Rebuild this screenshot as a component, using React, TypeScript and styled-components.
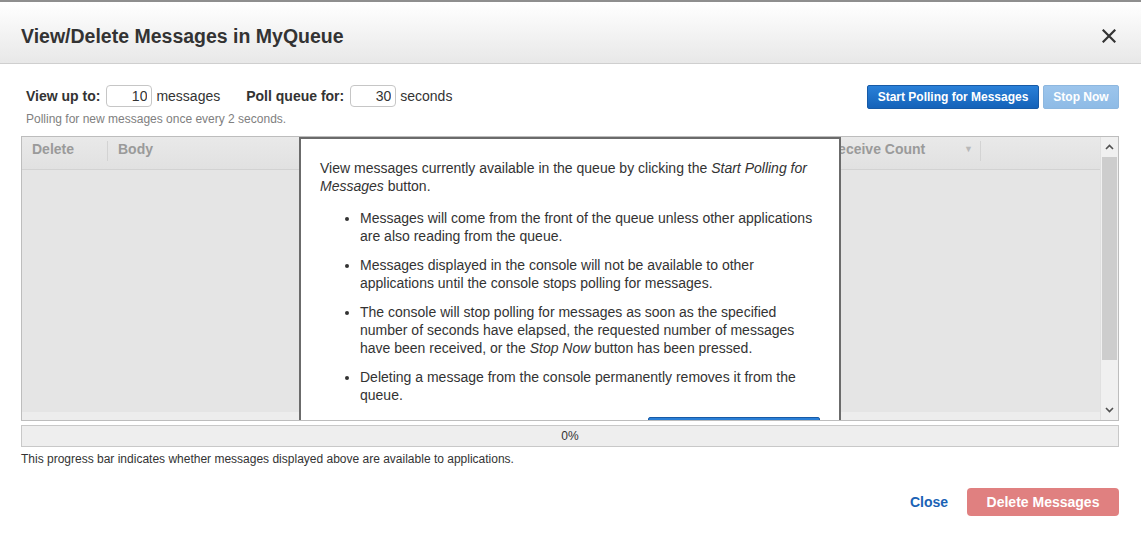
import React from 'react';
import styled, { createGlobalStyle } from 'styled-components';

const GlobalStyle = createGlobalStyle`
  html, body {
    margin: 0;
    padding: 0;
    background: #fff;
    font-family: "Liberation Sans", Arial, sans-serif;
    color: #333;
  }
`;

const Dialog = styled.div`
  width: 1141px;
  height: 533px;
  border-top: 2px solid #8e8e8e;
  box-sizing: border-box;
  display: flex;
  flex-direction: column;
`;

const Header = styled.div`
  height: 62px;
  box-sizing: border-box;
  display: flex;
  align-items: center;
  justify-content: space-between;
  padding: 7px 24px 0 21px;
  background: linear-gradient(#ffffff, #e8e8e8);
  border-bottom: 1px solid #cfcfcf;
`;

const Title = styled.h1`
  margin: 0;
  font-size: 19.5px;
  font-weight: bold;
  color: #333;
`;

const CloseIcon = styled.button`
  border: 0;
  background: none;
  padding: 0;
  width: 16px;
  height: 16px;
  display: flex;
  align-items: center;
  justify-content: center;
  cursor: pointer;
`;

const Body = styled.div`
  padding: 21px 22px 0 21px;
  display: flex;
  flex-direction: column;
`;

const ControlsRow = styled.div`
  display: flex;
  justify-content: space-between;
  align-items: flex-start;
  padding-left: 5px;
`;

const Controls = styled.div`
  display: flex;
  flex-direction: column;
`;

const Fields = styled.div`
  display: flex;
  align-items: center;
  font-size: 14px;
  height: 24px;
  margin-top: -1px;
`;

const FieldLabel = styled.label<{ $gap?: number }>`
  font-weight: bold;
  margin-right: 6px;
  margin-left: ${({ $gap }) => $gap ?? 0}px;
`;

const NumberInput = styled.input`
  width: 46px;
  height: 22px;
  box-sizing: border-box;
  border: 1px solid #c6c6c6;
  border-radius: 4px;
  text-align: right;
  font-family: inherit;
  font-size: 14px;
  color: #333;
  padding: 0 4px;
  margin-right: 4px;
`;

const Hint = styled.div`
  font-size: 12px;
  color: #808080;
  margin-top: 4px;
`;

const Buttons = styled.div`
  display: flex;
  gap: 4px;
`;

const BlueButton = styled.button<{ $disabled?: boolean; $w: number }>`
  width: ${({ $w }) => $w}px;
  height: 24px;
  padding: 0;
  border-radius: 2px;
  font-family: inherit;
  font-size: 12px;
  font-weight: bold;
  color: #fff;
  white-space: nowrap;
  border: 1px solid ${({ $disabled }) => ($disabled ? '#8db7df' : '#175aa6')};
  background: ${({ $disabled }) =>
    $disabled ? 'linear-gradient(#9cc5ec, #8ebbe6)' : 'linear-gradient(#2a80d8, #1462b9)'};
`;

const TableWrap = styled.div`
  position: relative;
  margin-top: 10px;
  height: 285px;
  box-sizing: border-box;
  border: 1px solid #bdbdbd;
  background: #e5e5e5;
  overflow: hidden;
  display: flex;
`;

const Grid = styled.div`
  flex: 1;
  display: flex;
  flex-direction: column;
`;

const HeadRow = styled.div`
  height: 33px;
  box-sizing: border-box;
  display: flex;
  align-items: flex-start;
  padding-top: 1px;
  background: linear-gradient(#e9e9e9, #e1e1e1);
  border-bottom: 1px solid #d2d2d2;
`;

const HeadCell = styled.div<{ $w: number }>`
  width: ${({ $w }) => $w}px;
  height: 22px;
  box-sizing: border-box;
  display: flex;
  align-items: center;
  justify-content: space-between;
  padding: 0 10px;
  font-size: 14px;
  font-weight: bold;
  color: #9a9a9a;
  position: relative;
  &::after {
    content: '';
    position: absolute;
    right: 0;
    top: 3px;
    bottom: -1px;
    border-right: 1px solid #d3d3d3;
  }
`;

const SortArrow = styled.span`
  font-size: 9px;
  color: #b8b8b8;
  margin-right: -2px;
`;

const RowsArea = styled.div`
  flex: 1;
  display: flex;
  flex-direction: column;
  justify-content: flex-end;
`;

const HStrip = styled.div`
  height: 8px;
  background: #ededed;
`;

const Scrollbar = styled.div`
  width: 17px;
  display: flex;
  flex-direction: column;
  align-items: stretch;
  background: #f0f0f0;
  border-left: 1px solid #e0e0e0;
`;

const ScrollArrow = styled.div`
  height: 20px;
  display: flex;
  align-items: center;
  justify-content: center;
`;

const Thumb = styled.div`
  height: 203px;
  margin: 0 1px;
  background: #cdcdcd;
`;

const ScrollFill = styled.div`
  flex: 1;
`;

const Overlay = styled.div`
  position: absolute;
  left: 277px;
  top: 0;
  width: 542px;
  height: 300px;
  box-sizing: border-box;
  background: #fff;
  border: 2px solid #6b6b6b;
  padding: 20px 19px 0 19px;
  font-size: 14px;
  line-height: 18px;
  color: #333;
`;

const Intro = styled.p`
  margin: 0 0 14px;
`;

const Bullets = styled.ul`
  margin: 0;
  padding-left: 40px;
  li {
    margin-bottom: 11px;
  }
`;

const OverlayActions = styled.div`
  display: flex;
  justify-content: flex-end;
  padding-top: 2px;
`;

const ProgressBar = styled.div`
  margin-top: 4px;
  height: 22px;
  box-sizing: border-box;
  border: 1px solid #c8c8c8;
  background: #eeeeee;
  display: flex;
  align-items: center;
  justify-content: center;
  font-size: 12px;
  color: #333;
`;

const Caption = styled.div`
  font-size: 12px;
  margin-top: 5px;
  color: #333;
`;

const Footer = styled.div`
  display: flex;
  justify-content: flex-end;
  align-items: center;
  gap: 19px;
  padding: 22px 22px 0 0;
`;

const LinkButton = styled.button`
  border: 0;
  background: none;
  padding: 0;
  font-family: inherit;
  font-size: 14px;
  font-weight: bold;
  color: #1a62b5;
`;

const DangerButton = styled.button`
  width: 152px;
  height: 28px;
  border: 0;
  border-radius: 4px;
  background: #e08080;
  color: #fff;
  font-family: inherit;
  font-size: 14px;
  font-weight: bold;
`;

const columns = [
  { label: 'Delete', w: 86 },
  { label: 'Body', w: 300 },
  { label: 'Size', w: 190 },
  { label: 'Sent', w: 220 },
  { label: 'Receive Count', w: 163, sort: true },
];

const App: React.FC = () => (
  <>
    <GlobalStyle />
    <Dialog>
      <Header>
        <Title>View/Delete Messages in MyQueue</Title>
        <CloseIcon aria-label="Close">
          <svg width="14" height="14" viewBox="0 0 14 14">
            <path d="M1.5 1.5 L12.5 12.5 M12.5 1.5 L1.5 12.5" stroke="#333" strokeWidth="2.2" strokeLinecap="square" />
          </svg>
        </CloseIcon>
      </Header>
      <Body>
        <ControlsRow>
          <Controls>
            <Fields>
              <FieldLabel>View up to:</FieldLabel>
              <NumberInput defaultValue="10" />
              <span>messages</span>
              <FieldLabel $gap={26}>Poll queue for:</FieldLabel>
              <NumberInput defaultValue="30" />
              <span>seconds</span>
            </Fields>
            <Hint>Polling for new messages once every 2 seconds.</Hint>
          </Controls>
          <Buttons>
            <BlueButton $w={172}>Start Polling for Messages</BlueButton>
            <BlueButton $w={76} $disabled>Stop Now</BlueButton>
          </Buttons>
        </ControlsRow>

        <TableWrap>
          <Grid>
            <HeadRow>
              {columns.map((c) => (
                <HeadCell key={c.label} $w={c.w}>
                  <span>{c.label}</span>
                  {c.sort && <SortArrow>▼</SortArrow>}
                </HeadCell>
              ))}
            </HeadRow>
            <RowsArea>
              <HStrip />
            </RowsArea>
          </Grid>
          <Scrollbar>
            <ScrollArrow>
              <svg width="9" height="6" viewBox="0 0 9 6">
                <path d="M1 5 L4.5 1.5 L8 5" fill="none" stroke="#505050" strokeWidth="1.6" />
              </svg>
            </ScrollArrow>
            <Thumb />
            <ScrollFill />
            <ScrollArrow>
              <svg width="9" height="6" viewBox="0 0 9 6">
                <path d="M1 1 L4.5 4.5 L8 1" fill="none" stroke="#505050" strokeWidth="1.6" />
              </svg>
            </ScrollArrow>
          </Scrollbar>

          <Overlay>
            <Intro>
              View messages currently available in the queue by clicking the <i>Start Polling for Messages</i> button.
            </Intro>
            <Bullets>
              <li>Messages will come from the front of the queue unless other applications are also reading from the queue.</li>
              <li>Messages displayed in the console will not be available to other applications until the console stops polling for messages.</li>
              <li>
                The console will stop polling for messages as soon as the specified number of seconds have elapsed, the requested number of
                messages have been received, or the <i>Stop Now</i> button has been pressed.
              </li>
              <li>Deleting a message from the console permanently removes it from the queue.</li>
            </Bullets>
            <OverlayActions>
              <BlueButton $w={172}>Start Polling for Messages</BlueButton>
            </OverlayActions>
          </Overlay>
        </TableWrap>

        <ProgressBar>0%</ProgressBar>
        <Caption>This progress bar indicates whether messages displayed above are available to applications.</Caption>
      </Body>
      <Footer>
        <LinkButton>Close</LinkButton>
        <DangerButton>Delete Messages</DangerButton>
      </Footer>
    </Dialog>
  </>
);

export default App;
